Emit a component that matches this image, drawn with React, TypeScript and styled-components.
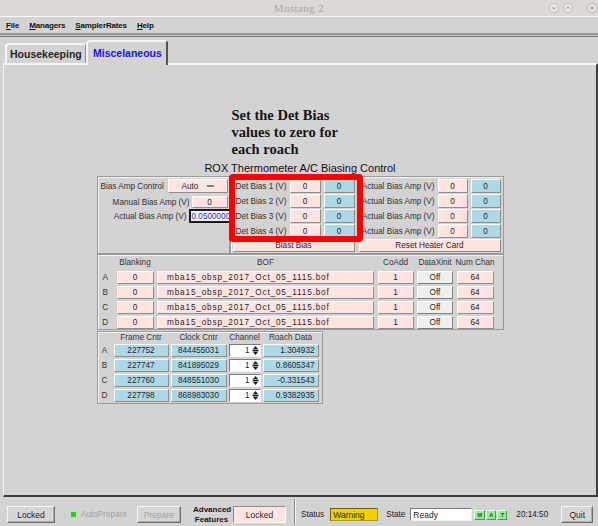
import React from "react";
import styled, { createGlobalStyle } from "styled-components";

const BG = "#d3d3d3";
const PINK = "#ffe4e1";
const BLUE = "#add8e6";

const GlobalStyle = createGlobalStyle`
  html, body { margin: 0; padding: 0; background: ${BG}; }
  body { width: 598px; height: 526px; overflow: hidden; font-family: "Liberation Sans", Arial, sans-serif; }
  *, *::before, *::after { box-sizing: border-box; }
`;

const Window = styled.div`
  width: 598px;
  height: 526px;
  display: flex;
  flex-direction: column;
  background: ${BG};
  color: #1e1e1e;
`;

/* ---------- title bar ---------- */
const TitleBar = styled.div`
  flex: none;
  height: 17px;
  background: #dcd9d5;
  border-bottom: 1px solid #fbfbfb;
  display: grid;
  grid-template-columns: 1fr auto 1fr;
  align-items: center;
`;
const TitleText = styled.div`
  grid-column: 2;
  font-family: "Liberation Serif", serif;
  font-size: 11px;
  color: #aaa7a4;
  letter-spacing: 0.4px;
`;
const WinControls = styled.div`
  grid-column: 3;
  justify-self: end;
  display: flex;
  align-items: center;
  padding-right: 1px;
`;
const WinBtn = styled.svg<{ $gap: number }>`
  display: block;
  width: 10px;
  height: 10px;
  margin-left: ${(p) => p.$gap}px;
`;

/* ---------- menu ---------- */
const MenuBar = styled.div`
  flex: none;
  height: 16px;
  display: flex;
  align-items: center;
  gap: 10px;
  padding-left: 6px;
  font-size: 8px;
  font-weight: bold;
  letter-spacing: -0.15px;
  color: #111;
`;
const MenuItem = styled.span`
  u { text-decoration: underline; text-underline-offset: 1px; }
`;
const MenuRule = styled.div`
  flex: none;
  height: 4px;
  background: #c2c2c2;
  border-top: 2px solid #969696;
  border-bottom: 1px solid #7e7e7e;
`;

/* ---------- tabs ---------- */
const TabRow = styled.div`
  flex: none;
  height: 26px;
  display: flex;
  align-items: flex-end;
  padding-left: 5px;
  position: relative;
  z-index: 1;
`;
const Tab = styled.div<{ $active?: boolean; $w: number }>`
  width: ${(p) => p.$w}px;
  height: ${(p) => (p.$active ? 25 : 20)}px;
  margin-bottom: ${(p) => (p.$active ? -2 : 0)}px;
  background: ${BG};
  border-top: 2px solid #f5f5f5;
  border-left: 2px solid #f5f5f5;
  border-right: ${(p) => (p.$active ? "2px solid #555" : "1px solid #8f8f8f")};
  border-radius: 4px 3px 0 0;
  display: flex;
  align-items: ${(p) => (p.$active ? "flex-start" : "center")};
  padding: ${(p) => (p.$active ? "5px 0 0 5px" : "0 0 1px 3px")};
  font-size: 10.5px;
  font-weight: bold;
  color: ${(p) => (p.$active ? "#1515e8" : "#262626")};
  white-space: nowrap;
`;
const Panel = styled.div`
  flex: 1;
  min-height: 0;
  margin-left: 3px;
  border-top: 2px solid #f5f5f5;
  border-left: 1px solid #f5f5f5;
  border-right: 2px solid #3f3f3f;
  border-bottom: 2px solid #3f3f3f;
  display: flex;
  flex-direction: column;
  align-items: center;
  padding-top: 42px;
`;

/* ---------- content ---------- */
const Content = styled.div`
  position: relative;
  width: 407px;
  display: flex;
  flex-direction: column;
`;
const Instruction = styled.div`
  margin-left: 135px;
  font-family: "Liberation Serif", serif;
  font-weight: bold;
  font-size: 14.5px;
  line-height: 17px;
  color: #161616;
`;
const SectionTitle = styled.div`
  margin-top: 3.5px;
  text-align: center;
  font-size: 11px;
  line-height: 13px;
  color: #111;
`;
const Annotation = styled.div`
  position: absolute;
  left: 132px;
  top: 67px;
  width: 134px;
  height: 68px;
  border: 6px solid #ff0000;
  border-radius: 4px;
  pointer-events: none;
`;

const Box = styled.div`
  border: 1px solid #9a9a9a;
  box-shadow: inset 1px 1px 0 #f3f3f3;
`;

const UpperBox = styled.div`
  margin-top: 1.5px;
  height: 78px;
  display: flex;
`;
const LeftSub = styled(Box)`
  flex: none;
  width: 133px;
  padding: 2px 1px 0 3px;
  display: flex;
  flex-direction: column;
`;
const LeftRow = styled.div<{ $h: number; $mt: number; $end?: boolean }>`
  height: ${(p) => p.$h}px;
  margin-top: ${(p) => p.$mt}px;
  display: flex;
  align-items: center;
  justify-content: ${(p) => (p.$end ? "flex-end" : "space-between")};
  gap: 2px;
`;
const Label = styled.span<{ $right?: boolean }>`
  font-size: 8.2px;
  color: #303030;
  white-space: nowrap;
  text-align: ${(p) => (p.$right ? "right" : "left")};
`;
const RightSub = styled(Box)`
  flex: 1;
  padding: 2px 0 0 5px;
  display: grid;
  grid-template-columns: 51px 31px 31px 77px 30px 30px;
  grid-template-rows: repeat(4, 14px) 13px;
  column-gap: 3px;
  row-gap: 1px;
  align-items: stretch;
`;
const CellLabel = styled(Label)`
  align-self: center;
`;

type Tone = "pink" | "blue" | "white";
const toneBg: Record<Tone, string> = { pink: PINK, blue: BLUE, white: "#ffffff" };

const Field = styled.div<{ $tone: Tone; $w?: number; $align?: "left" | "center" | "right"; $spaced?: boolean }>`
  flex: none;
  width: ${(p) => (p.$w ? `${p.$w}px` : "auto")};
  height: 100%;
  min-width: 0;
  background: ${(p) => toneBg[p.$tone]};
  border: 1px solid;
  border-color: #fbfbfb #8e8e8e #8e8e8e #fbfbfb;
  display: flex;
  align-items: center;
  justify-content: ${(p) => (p.$align === "left" ? "flex-start" : p.$align === "right" ? "flex-end" : "center")};
  padding: ${(p) => (p.$align === "left" ? "0 0 0 9px" : "0 3px")};
  font-size: 8.2px;
  letter-spacing: ${(p) => (p.$spaced ? "0.85px" : "0")};
  color: #262626;
  white-space: nowrap;
  overflow: hidden;
`;
const ActiveField = styled.div`
  flex: none;
  width: 42px;
  height: 100%;
  margin-right: -3px;
  background: #f5f1fc;
  border: 2px solid #1b1b1b;
  display: flex;
  align-items: center;
  padding-left: 1px;
  font-size: 8.2px;
  color: #3b35b5;
  white-space: nowrap;
  overflow: hidden;
`;
const Dropdown = styled.div`
  flex: none;
  width: 60px;
  height: 100%;
  background: ${PINK};
  border: 1px solid;
  border-color: #fbfbfb #8e8e8e #8e8e8e #fbfbfb;
  display: flex;
  align-items: center;
  padding-left: 13px;
  font-size: 8.2px;
  color: #262626;
`;
const DropMark = styled.span`
  margin-left: auto;
  margin-right: 13px;
  width: 7px;
  height: 2px;
  background: #7c7c7c;
  box-shadow: 0 1px 0 #fafafa;
`;
const PinkButton = styled.div<{ $col: string; $ml: number }>`
  grid-column: ${(p) => p.$col};
  margin-left: ${(p) => p.$ml}px;
  background: ${PINK};
  border: 1px solid;
  border-color: #fbfbfb #8a8a8a #8a8a8a #fbfbfb;
  display: flex;
  align-items: center;
  justify-content: center;
  font-size: 8.2px;
  color: #262626;
`;

/* BOF table */
const BofBox = styled(Box)`
  height: 76px;
  padding: 1px 0 0 0;
  display: grid;
  grid-template-columns: 15.5px 37px 217px 36px 36px 37px;
  grid-template-rows: 13px repeat(4, 13px);
  column-gap: 3.5px;
  row-gap: 2px;
`;
const HeadCell = styled.div`
  display: flex;
  align-items: center;
  justify-content: center;
  font-size: 8.2px;
  color: #333;
  white-space: nowrap;
`;
const RowLabel = styled.div`
  display: flex;
  align-items: center;
  justify-content: center;
  font-size: 8.2px;
  color: #333;
`;
const OffButton = styled.div`
  background: #efefef;
  border: 1px solid;
  border-color: #fdfdfd #7d7d7d #7d7d7d #fdfdfd;
  display: flex;
  align-items: center;
  justify-content: center;
  font-size: 8.2px;
  color: #262626;
`;

/* data table */
const DataBox = styled(Box)`
  margin-top: 1px;
  width: 226px;
  height: 73px;
  padding: 0;
  display: grid;
  grid-template-columns: 14px 55px 56px 32px 56px;
  grid-template-rows: 10px repeat(4, 13px);
  column-gap: 2px;
  row-gap: 2px;
`;
const Spinner = styled.div`
  background: #ffffff;
  border: 1px solid;
  border-color: #7a7a7a #f5f5f5 #f5f5f5 #7a7a7a;
  display: flex;
  align-items: center;
  justify-content: flex-end;
  padding-right: 1px;
  font-size: 8.2px;
  color: #222;
  gap: 2px;
`;

/* status bar */
const StatusBar = styled.div`
  flex: none;
  height: 29px;
  display: flex;
  align-items: center;
  padding: 6px 0 0 7px;
  font-size: 8.2px;
  color: #222;
`;
const SBButton = styled.div<{ $w: number; $ml?: number; $disabled?: boolean }>`
  flex: none;
  width: ${(p) => p.$w}px;
  height: 17px;
  margin-left: ${(p) => p.$ml ?? 0}px;
  background: #d6d6d6;
  border: 1px solid;
  border-color: #f7f7f7 #6d6d6d #6d6d6d #f7f7f7;
  box-shadow: inset -1px -1px 0 #ababab;
  display: flex;
  align-items: center;
  justify-content: center;
  font-size: 8.5px;
  color: ${(p) => (p.$disabled ? "#a2a2a2" : "#1e1e1e")};
`;
const Led = styled.span`
  flex: none;
  margin-left: 15px;
  width: 7px;
  height: 7px;
  background: #1fd41f;
  border: 1px solid #b9e6b9;
`;
const DimText = styled.span<{ $ml: number }>`
  margin-left: ${(p) => p.$ml}px;
  color: #a0a0a0;
  white-space: nowrap;
`;
const SBText = styled.span<{ $ml: number }>`
  flex: none;
  margin-left: ${(p) => p.$ml}px;
  white-space: nowrap;
`;
const Advanced = styled.div`
  flex: none;
  width: 37px;
  margin-left: 12px;
  text-align: center;
  font-weight: bold;
  font-size: 8px;
  line-height: 10px;
  color: #151515;
`;
const SBField = styled.div<{ $w: number; $ml: number; $bg: string; $border: string; $align?: "left" | "center" }>`
  flex: none;
  width: ${(p) => p.$w}px;
  height: ${(p) => (p.$align === "left" ? 13 : 17)}px;
  margin-left: ${(p) => p.$ml}px;
  background: ${(p) => p.$bg};
  border: 1px solid;
  border-color: ${(p) => p.$border};
  display: flex;
  align-items: center;
  justify-content: ${(p) => (p.$align === "left" ? "flex-start" : "center")};
  padding-left: ${(p) => (p.$align === "left" ? 2 : 0)}px;
  font-size: 8.5px;
  color: #1e1e1e;
`;
const Separator = styled.div`
  flex: none;
  align-self: stretch;
  margin: -4px 0 1px 8px;
  width: 2px;
  border-left: 1px solid #8a8a8a;
  border-right: 1px solid #f5f5f5;
`;
const Mat = styled.div`
  flex: none;
  margin-left: 2px;
  display: flex;
  gap: 1px;
`;
const MatBox = styled.div<{ $w: number }>`
  width: ${(p) => p.$w}px;
  height: 10px;
  background: #8ff08f;
  border: 1px solid;
  border-color: #f2fff2 #4e9a4e #4e9a4e #f2fff2;
  display: flex;
  align-items: center;
  justify-content: center;
  font-size: 5.5px;
  font-weight: bold;
  color: #1d5a1d;
`;

const ChevronBtn = ({ gap, kind }: { gap: number; kind: "down" | "up" | "close" }) => (
  <WinBtn $gap={gap} viewBox="0 0 10 10">
    <circle cx="5" cy="5" r="4.5" fill="#e9e7e4" stroke="#b9b6b2" strokeWidth="0.8" />
    {kind === "down" && <path d="M3 4.2 L5 6.2 L7 4.2" fill="none" stroke="#9b9894" strokeWidth="1" />}
    {kind === "up" && <path d="M3 5.8 L5 3.8 L7 5.8" fill="none" stroke="#9b9894" strokeWidth="1" />}
    {kind === "close" && <path d="M3.3 3.3 L6.7 6.7 M6.7 3.3 L3.3 6.7" fill="none" stroke="#9b9894" strokeWidth="1" />}
  </WinBtn>
);

const SpinArrows = () => (
  <svg width="7" height="11" viewBox="0 0 7 11" style={{ display: "block" }}>
    <path d="M0.5 4.5 L3.5 1 L6.5 4.5 Z" fill="#222" />
    <rect x="0.5" y="5" width="6" height="1" fill="#222" />
    <path d="M0.5 6.5 L3.5 10 L6.5 6.5 Z" fill="#222" />
  </svg>
);

const letters = ["A", "B", "C", "D"];
const dataRows = [
  { frame: "227752", clock: "844455031", roach: "1.304932" },
  { frame: "227747", clock: "841895029", roach: "0.8605347" },
  { frame: "227760", clock: "848551030", roach: "-0.331543" },
  { frame: "227798", clock: "868983030", roach: "0.9382935" },
];

export default function App() {
  return (
    <>
      <GlobalStyle />
      <Window>
        <TitleBar>
          <TitleText>Mustang 2</TitleText>
          <WinControls>
            <ChevronBtn gap={0} kind="down" />
            <ChevronBtn gap={4} kind="up" />
            <ChevronBtn gap={14} kind="close" />
          </WinControls>
        </TitleBar>
        <MenuBar>
          <MenuItem><u>F</u>ile</MenuItem>
          <MenuItem><u>M</u>anagers</MenuItem>
          <MenuItem><u>S</u>amplerRates</MenuItem>
          <MenuItem><u>H</u>elp</MenuItem>
        </MenuBar>
        <MenuRule />
        <TabRow>
          <Tab $w={81}>Housekeeping</Tab>
          <Tab $w={82} $active>Miscelaneous</Tab>
        </TabRow>
        <Panel>
          <Content>
            <Instruction>
              Set the Det Bias
              <br />
              values to zero for
              <br />
              each roach
            </Instruction>
            <SectionTitle>ROX Thermometer A/C Biasing Control</SectionTitle>
            <UpperBox>
              <LeftSub>
                <LeftRow $h={14} $mt={0}>
                  <Label>Bias Amp Control</Label>
                  <Dropdown>
                    Auto
                    <DropMark />
                  </Dropdown>
                </LeftRow>
                <LeftRow $h={12} $mt={3} $end>
                  <Label $right>Manual Bias Amp (V)</Label>
                  <Field $tone="pink" $w={36}>0</Field>
                </LeftRow>
                <LeftRow $h={14} $mt={1} $end>
                  <Label $right>Actual Bias Amp (V)</Label>
                  <ActiveField>0.0500000</ActiveField>
                </LeftRow>
              </LeftSub>
              <RightSub>
                {[1, 2, 3, 4].map((n) => (
                  <React.Fragment key={n}>
                    <CellLabel>Det Bias {n} (V)</CellLabel>
                    <Field $tone="pink">0</Field>
                    <Field $tone="blue">0</Field>
                    <CellLabel $right>Actual Bias Amp (V)</CellLabel>
                    <Field $tone="pink">0</Field>
                    <Field $tone="blue">0</Field>
                  </React.Fragment>
                ))}
                <PinkButton $col="1 / 4" $ml={-3}>Blast Bias</PinkButton>
                <PinkButton $col="4 / 7" $ml={1}>Reset Heater Card</PinkButton>
              </RightSub>
            </UpperBox>
            <BofBox>
              <span />
              <HeadCell>Blanking</HeadCell>
              <HeadCell>BOF</HeadCell>
              <HeadCell>CoAdd</HeadCell>
              <HeadCell>DataXinit</HeadCell>
              <HeadCell>Num Chan</HeadCell>
              {letters.map((l) => (
                <React.Fragment key={l}>
                  <RowLabel>{l}</RowLabel>
                  <Field $tone="pink">0</Field>
                  <Field $tone="pink" $align="left" $spaced>mba15_obsp_2017_Oct_05_1115.bof</Field>
                  <Field $tone="pink">1</Field>
                  <OffButton>Off</OffButton>
                  <Field $tone="pink">64</Field>
                </React.Fragment>
              ))}
            </BofBox>
            <DataBox>
              <span />
              <HeadCell>Frame Cntr</HeadCell>
              <HeadCell>Clock Cntr</HeadCell>
              <HeadCell>Channel</HeadCell>
              <HeadCell>Roach Data</HeadCell>
              {dataRows.map((r, i) => (
                <React.Fragment key={letters[i]}>
                  <RowLabel>{letters[i]}</RowLabel>
                  <Field $tone="blue">{r.frame}</Field>
                  <Field $tone="blue">{r.clock}</Field>
                  <Spinner>
                    1
                    <SpinArrows />
                  </Spinner>
                  <Field $tone="blue" $align="right">{r.roach}</Field>
                </React.Fragment>
              ))}
            </DataBox>
            <Annotation />
          </Content>
        </Panel>
        <StatusBar>
          <SBButton $w={48}>Locked</SBButton>
          <Led />
          <DimText $ml={4}>AutoPrepare</DimText>
          <SBButton $w={44} $ml={10} $disabled>Prepare</SBButton>
          <Advanced>
            Advanced
            <br />
            Features
          </Advanced>
          <SBField $w={53} $ml={3} $bg={PINK} $border="#8e8e8e #fbfbfb #fbfbfb #8e8e8e">Locked</SBField>
          <Separator />
          <SBText $ml={5}>Status</SBText>
          <SBField $w={48} $ml={6} $bg="#f1d000" $border="#6b5c00 #b29a00 #b29a00 #6b5c00" $align="left">Warning</SBField>
          <SBText $ml={8}>State</SBText>
          <SBField $w={62} $ml={5} $bg="#ffffff" $border="#7a7a7a #f2f2f2 #f2f2f2 #7a7a7a" $align="left">Ready</SBField>
          <Mat>
            <MatBox $w={11}>M</MatBox>
            <MatBox $w={10}>A</MatBox>
            <MatBox $w={10}>T</MatBox>
          </Mat>
          <SBText $ml={9}>20:14:50</SBText>
          <SBButton $w={32} $ml={13}>Quit</SBButton>
        </StatusBar>
      </Window>
    </>
  );
}
